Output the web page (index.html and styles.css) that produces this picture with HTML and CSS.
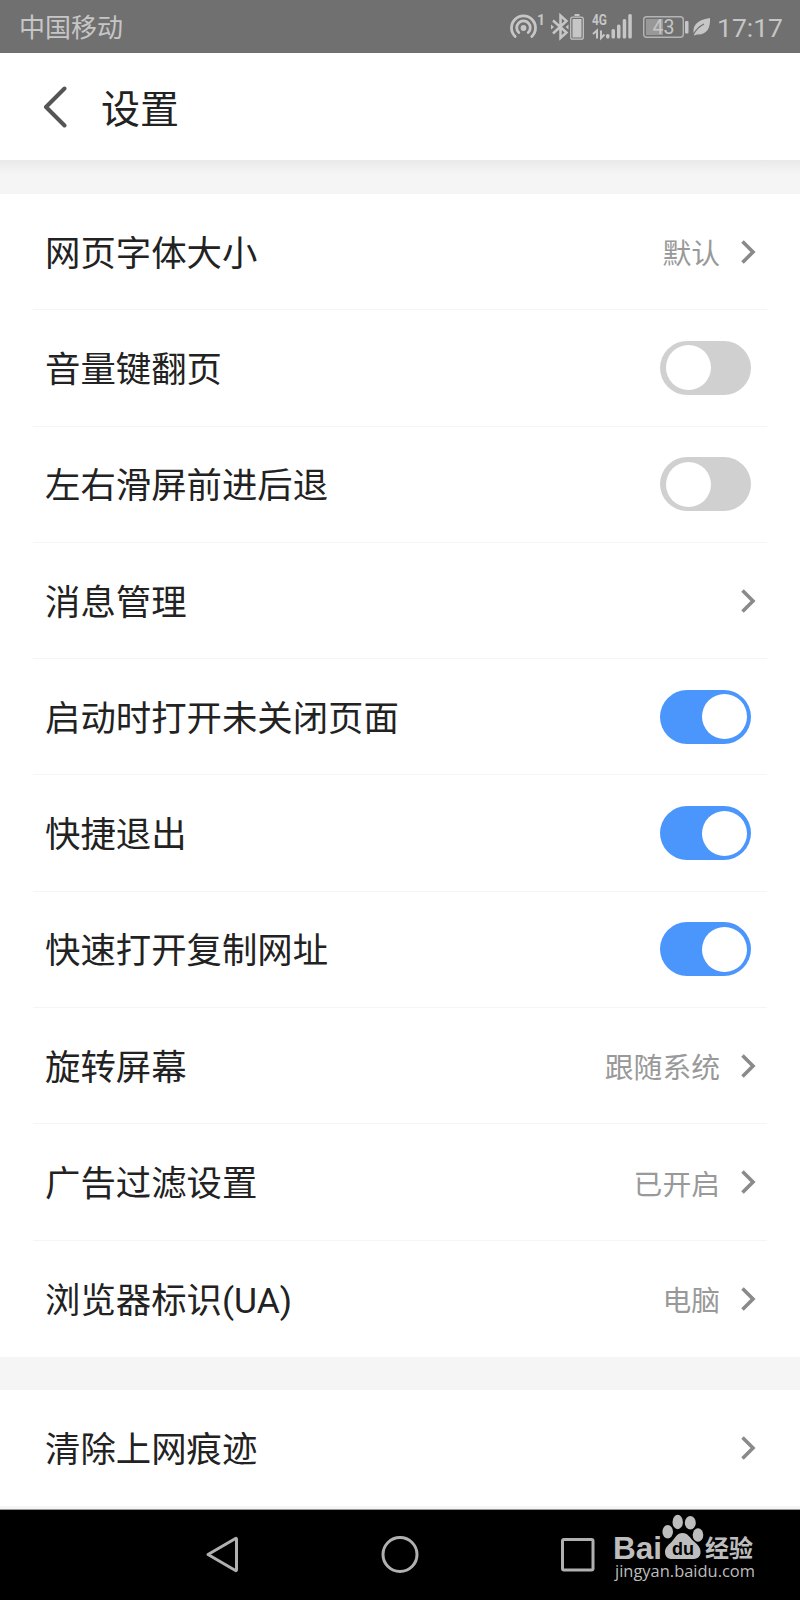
FILE: index.html
```html
<!DOCTYPE html>
<html lang="zh-CN">
<head>
    <meta charset="UTF-8">
    <meta name="viewport" content="width=device-width, initial-scale=1.0">
    <title>设置</title>
    <link rel="stylesheet" href="styles.css">
</head>
<body>
    <div class="status-bar">
        <span class="carrier">中国移动</span>
        <svg class="status-icons" width="214" height="53" viewBox="0 0 214 53">
            <!-- hotspot -->
            <g fill="none" stroke="#c6c6c6" stroke-width="2.8" stroke-linecap="round">
                <path d="M5.2 36.5A12 12 0 1 1 21.8 36.5"/>
                <path d="M8.8 32.6A6.8 6.8 0 1 1 18.2 32.6"/>
            </g>
            <circle cx="13.5" cy="28" r="2.9" fill="#c6c6c6"/>
            <text class="bold" x="27" y="25" font-size="14">1</text>
            <!-- bluetooth -->
            <path d="M43 20.500L56.500 32.500L50.500 38V15.500L56.500 21L43 33.500" fill="none" stroke="#c6c6c6" stroke-width="2.5"/>
            <path d="M41 24.500l3 2.500-3 2.500zM58.500 24.500l-3 2.500 3 2.500z" fill="#c6c6c6"/>
            <rect x="60.700" y="17.200" width="12.600" height="22" rx="2" fill="none" stroke="#c6c6c6" stroke-width="1.2"/>
            <rect x="62.500" y="19" width="9" height="18.500" fill="#c6c6c6"/>
            <rect x="64.500" y="14" width="5" height="2" fill="#c6c6c6"/>
            <!-- mobile signal -->
            <text class="bold" x="82" y="25" font-size="14" textLength="15" lengthAdjust="spacingAndGlyphs">4G</text>
            <path d="M83 34l4-3.500V38.500M91 30.500V38l3.500-3.500" fill="none" stroke="#c6c6c6" stroke-width="2"/>
            <g fill="#c6c6c6">
                <rect x="96" y="34" width="3.5" height="4.5" rx="1.5"/>
                <rect x="101.5" y="29" width="3.5" height="9.5" rx="1.5"/>
                <rect x="107" y="24.5" width="3.5" height="14" rx="1.5"/>
                <rect x="112.7" y="19" width="3.5" height="19.5" rx="1.5"/>
                <rect x="118.3" y="14" width="3.5" height="24.5" rx="1.5"/>
            </g>
            <!-- battery -->
            <rect x="133.7" y="16.7" width="39.6" height="20.6" rx="3" fill="none" stroke="#b4b4b4" stroke-width="1.4"/>
            <rect x="136" y="19" width="17" height="16" fill="#989898"/>
            <text x="142.5" y="34" font-size="19.5">43</text>
            <rect x="175" y="21" width="3.5" height="12.5" rx="1" fill="#c6c6c6"/>
            <!-- power saving leaf -->
            <path d="M184 35C182 26 186 20 200 18C200.500 28 197 35 187 34.500L184.500 35.500Z" fill="#c6c6c6"/>
            <path d="M183.500 34.500Q187 27.500 194 24" fill="none" stroke="#707070" stroke-width="1.2"/>
        </svg>
        <span class="clock">17:17</span>
    </div>

    <div class="header">
        <svg class="back" width="24" height="42" viewBox="0 0 24 42">
            <path d="M21.500 2.500L3 21L21.500 39.500" fill="none" stroke="#555" stroke-width="4" stroke-linecap="round" stroke-linejoin="round"/>
        </svg>
        <h1>设置</h1>
    </div>

    <div class="gap gap-top"></div>

    <div class="group">
        <div class="row">
            <span class="label">网页字体大小</span>
            <span class="value">默认</span>
            <svg class="arrow" viewBox="0 0 15 24"><path d="M1.500 1.500L12 12L1.500 22.500"/></svg>
        </div>
        <div class="row">
            <span class="label">音量键翻页</span>
            <span class="toggle"></span>
        </div>
        <div class="row">
            <span class="label">左右滑屏前进后退</span>
            <span class="toggle"></span>
        </div>
        <div class="row">
            <span class="label">消息管理</span>
            <svg class="arrow" viewBox="0 0 15 24"><path d="M1.500 1.500L12 12L1.500 22.500"/></svg>
        </div>
        <div class="row">
            <span class="label">启动时打开未关闭页面</span>
            <span class="toggle on"></span>
        </div>
        <div class="row">
            <span class="label">快捷退出</span>
            <span class="toggle on"></span>
        </div>
        <div class="row">
            <span class="label">快速打开复制网址</span>
            <span class="toggle on"></span>
        </div>
        <div class="row">
            <span class="label">旋转屏幕</span>
            <span class="value">跟随系统</span>
            <svg class="arrow" viewBox="0 0 15 24"><path d="M1.500 1.500L12 12L1.500 22.500"/></svg>
        </div>
        <div class="row">
            <span class="label">广告过滤设置</span>
            <span class="value">已开启</span>
            <svg class="arrow" viewBox="0 0 15 24"><path d="M1.500 1.500L12 12L1.500 22.500"/></svg>
        </div>
        <div class="row">
            <span class="label">浏览器标识(UA)</span>
            <span class="value">电脑</span>
            <svg class="arrow" viewBox="0 0 15 24"><path d="M1.500 1.500L12 12L1.500 22.500"/></svg>
        </div>
    </div>

    <div class="gap"></div>

    <div class="group">
        <div class="row">
            <span class="label">清除上网痕迹</span>
            <svg class="arrow" viewBox="0 0 15 24"><path d="M1.500 1.500L12 12L1.500 22.500"/></svg>
        </div>
    </div>

    <div class="nav-bar">
        <svg class="nav-icons" width="390" height="90" viewBox="0 0 390 90">
            <g fill="none" stroke="#b0b0b0" stroke-width="3" stroke-linejoin="round">
                <path d="M8 44.500L35.500 28.500Q36.500 28 36.500 29.500V59.500Q36.500 61 35.500 60.500Z"/>
                <circle cx="200" cy="44.500" r="17"/>
                <rect x="362.500" y="29.500" width="30.500" height="30.500" rx="1.500"/>
            </g>
        </svg>
        <svg class="watermark" width="150" height="80" viewBox="0 0 150 80">
            <g fill="#bdbdbd">
                <text class="brand" x="3" y="48.500" font-size="32" textLength="49" lengthAdjust="spacingAndGlyphs">Bai</text>
                <ellipse cx="57.700" cy="21.800" rx="5.300" ry="6.800"/>
                <ellipse cx="67.700" cy="12" rx="5.200" ry="7.200"/>
                <ellipse cx="80.300" cy="12.700" rx="5.500" ry="6.800"/>
                <ellipse cx="88" cy="25" rx="5.300" ry="6.800"/>
                <path d="M72.500 23C78 23 80 28 84 31.500C88 35 91 38 90.500 43C90 48 86 49.500 80 49H65C59 49.500 55 48 55 42C55 38 58 35 61.500 32C65 28 67 23 72.500 23Z"/>
                <text class="cjk" x="95" y="47" font-size="24" textLength="48" lengthAdjust="spacingAndGlyphs">经验</text>
                <text class="site" x="5" y="67" font-size="17" textLength="140" lengthAdjust="spacingAndGlyphs">jingyan.baidu.com</text>
            </g>
            <text class="du" x="62" y="45" font-size="18" textLength="22" lengthAdjust="spacingAndGlyphs">du</text>
        </svg>
    </div>
</body>
</html>
```
FILE: styles.css
```css
* {
    box-sizing: border-box;
}
body {
    margin: 0;
    width: 800px;
    height: 1600px;
    overflow: hidden;
    display: flex;
    flex-direction: column;
    background-color: #f5f5f5;
    color: #222;
    font-family: Roboto, "Noto Sans CJK SC", sans-serif;
}
svg {
    display: block;
    flex-shrink: 0;
}
.status-bar {
    display: flex;
    align-items: center;
    height: 53px;
    flex-shrink: 0;
    padding-left: 19px;
    background-color: #707070;
    color: #c6c6c6;
}
.carrier {
    width: 491px;
    padding-top: 3px;
    font-size: 26px;
    line-height: 50px;
}
.status-icons text {
    fill: #c6c6c6;
}
.status-icons .bold {
    font-weight: bold;
}
.status-icons {
    overflow: visible;
    margin-right: -7px;
}
.clock {
    padding-top: 2px;
    font-size: 26.5px;
    line-height: 51px;
}
.header {
    display: flex;
    align-items: center;
    height: 107px;
    flex-shrink: 0;
    padding-left: 43px;
    background-color: #fff;
}
h1 {
    margin: 7px 0 0 34px;
    font-size: 39px;
    font-weight: normal;
    line-height: 50px;
}
.gap {
    height: 33px;
    flex-shrink: 0;
}
.gap-top {
    height: 34px;
    background: linear-gradient(#e9e9e9, #f5f5f5 14px);
}
.group {
    flex-shrink: 0;
    background-color: #fff;
}
.row {
    display: flex;
    align-items: center;
    height: 116.3px;
    margin: 0 33px;
    padding: 0 11px 0 12px;
    border-bottom: 1px solid #f5f5f5;
}
.row:last-child {
    border-bottom: none;
}
.label {
    flex: 1;
    padding-top: 4px;
    font-size: 35.4px;
    line-height: 50px;
}
.value {
    margin-right: 21px;
    padding-top: 5px;
    color: #999;
    font-size: 28.8px;
    line-height: 40px;
}
.arrow {
    width: 15px;
    height: 24px;
    fill: none;
    stroke: #8a8a8a;
    stroke-width: 3.6px;
}
.toggle {
    display: flex;
    width: 91px;
    height: 54px;
    margin-right: 5px;
    padding: 4.5px 4.5px 4.5px 5.5px;
    border-radius: 27px;
    background-color: #d0d0d0;
}
.toggle::before {
    content: "";
    width: 45px;
    height: 45px;
    border-radius: 50%;
    background-color: #fff;
}
.toggle.on {
    justify-content: flex-end;
    background-color: #4a96fc;
}
.nav-bar {
    display: flex;
    height: 91px;
    flex-shrink: 0;
    margin-top: auto;
    padding-left: 200px;
    border-top: 1px solid #999;
    background-color: #000;
}
.nav-icons {
    overflow: visible;
}
.watermark {
    margin: 0 0 0 20px;
}
.brand, .du {
    font-family: "Liberation Sans", sans-serif;
    font-weight: bold;
}
.du {
    fill: #000;
}
.cjk {
    font-family: "Noto Sans CJK SC", sans-serif;
    font-weight: bold;
}
.site {
    font-family: "Open Sans", sans-serif;
}
```
